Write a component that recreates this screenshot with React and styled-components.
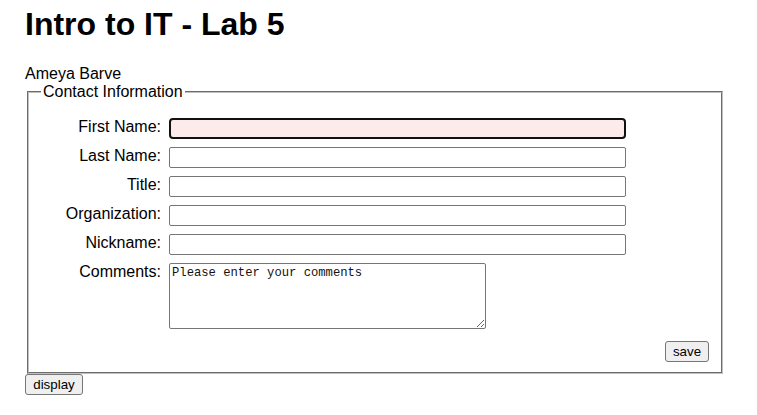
import { Fragment } from 'react'
import styled, { createGlobalStyle } from 'styled-components'

const GlobalStyle = createGlobalStyle`
  body {
    margin: 0;
    background: #fff;
    color: #000;
    font-family: "Liberation Sans", Arial, sans-serif;
  }
`

const Page = styled.div`
  padding: 6px 0 0 25px;
`

const Heading = styled.h1`
  margin: 0;
  font-size: 32px;
  line-height: 37px;
  font-weight: 700;
`

const Author = styled.div`
  margin-top: 22px;
  font-size: 16px;
  line-height: 18px;
`

const Fieldset = styled.fieldset`
  width: 696px;
  box-sizing: border-box;
  margin: 0 0 0 2px;
  padding: 17px 12px 10px;
  border: 2px groove #c0c0c0;
  min-width: 0;
`

const Legend = styled.legend`
  padding: 0 2px;
  font-size: 16px;
  line-height: 18px;
`

const FormGrid = styled.div`
  display: grid;
  grid-template-columns: 120px 457px;
  column-gap: 8px;
  row-gap: 8px;
  align-items: start;
`

const Label = styled.label`
  text-align: right;
  font-size: 16px;
  line-height: 18px;
`

const TextInput = styled.input`
  box-sizing: border-box;
  width: 457px;
  height: 21px;
  margin: 0;
  padding: 1px 2px;
  font-family: "Liberation Sans", Arial, sans-serif;
  font-size: 13.33px;
  border: ${props => (props.focused ? '2px solid #111' : '1px solid #767676')};
  border-radius: ${props => (props.focused ? '4px' : '2px')};
  background: ${props => (props.focused ? '#fdebeb' : '#fff')};
  outline: none;
`

const Comments = styled.textarea`
  box-sizing: border-box;
  width: 317px;
  height: 66px;
  margin: 0;
  padding: 2px;
  font-family: "Liberation Mono", "DejaVu Sans Mono", monospace;
  font-size: 12.2px;
  line-height: 15px;
  color: #111;
  border: 1px solid #767676;
  border-radius: 2px;
  outline: none;
`

const Actions = styled.div`
  display: flex;
  justify-content: flex-end;
  margin-top: 12px;
`

const Button = styled.button`
  box-sizing: border-box;
  width: ${props => props.width}px;
  height: 21px;
  margin: 0;
  padding: 1px 6px;
  font-family: "Liberation Sans", Arial, sans-serif;
  font-size: 13.33px;
  color: #000;
  background: #efefef;
  border: 1px solid #767676;
  border-radius: 3px;
`

const fields = [
  { id: 'first', label: 'First Name:' },
  { id: 'last', label: 'Last Name:' },
  { id: 'title', label: 'Title:' },
  { id: 'org', label: 'Organization:' },
  { id: 'nick', label: 'Nickname:' },
]

export default function App() {
  return (
    <>
      <GlobalStyle />
      <Page>
        <Heading>Intro to IT - Lab 5</Heading>
        <Author>Ameya Barve</Author>
        <Fieldset>
          <Legend>Contact Information</Legend>
          <FormGrid>
            {fields.map((field, index) => (
              <Fragment key={field.id}>
                <Label htmlFor={field.id}>{field.label}</Label>
                <TextInput id={field.id} type="text" focused={index === 0} />
              </Fragment>
            ))}
            <Label htmlFor="comments">Comments:</Label>
            <Comments id="comments" defaultValue="Please enter your comments" />
          </FormGrid>
          <Actions>
            <Button width={44}>save</Button>
          </Actions>
        </Fieldset>
        <Button width={58}>display</Button>
      </Page>
    </>
  )
}
